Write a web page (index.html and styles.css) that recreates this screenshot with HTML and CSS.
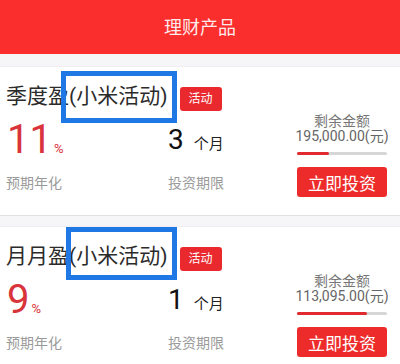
FILE: index.html
```html
<!DOCTYPE html>
<html lang="zh-CN">
  <head>
    <meta charset="UTF-8" />
    <meta name="viewport" content="width=device-width, initial-scale=1.0" />
    <title>理财产品</title>
    <link rel="stylesheet" href="styles.css">
  </head>
  <body>
    <div class="header">理财产品</div>

    <div class="product">
      <div class="mark mark-1"></div>
      <div class="product-main">
        <div class="product-title">
          <span class="name">季度盈(小米活动)</span>
          <span class="tag">活动</span>
        </div>
        <div class="product-stats">
          <div class="stat rate">
            <div class="stat-value"><span class="big">11</span><span class="unit">%</span></div>
            <div class="stat-label">预期年化</div>
          </div>
          <div class="stat period">
            <div class="stat-value"><span class="mid">3</span><span class="unit-dark">个月</span></div>
            <div class="stat-label">投资期限</div>
          </div>
        </div>
      </div>
      <div class="product-side">
        <div class="remain-label">剩余金额</div>
        <div class="remain-value">195,000.00(元)</div>
        <div class="progress"><div class="progress-fill" style="width: 36%"></div></div>
        <button class="invest-btn">立即投资</button>
      </div>
    </div>

    <div class="product">
      <div class="mark mark-2"></div>
      <div class="product-main">
        <div class="product-title">
          <span class="name">月月盈(小米活动)</span>
          <span class="tag">活动</span>
        </div>
        <div class="product-stats">
          <div class="stat rate">
            <div class="stat-value"><span class="big">9</span><span class="unit">%</span></div>
            <div class="stat-label">预期年化</div>
          </div>
          <div class="stat period">
            <div class="stat-value"><span class="mid">1</span><span class="unit-dark">个月</span></div>
            <div class="stat-label">投资期限</div>
          </div>
        </div>
      </div>
      <div class="product-side">
        <div class="remain-label">剩余金额</div>
        <div class="remain-value">113,095.00(元)</div>
        <div class="progress"><div class="progress-fill" style="width: 78%"></div></div>
        <button class="invest-btn">立即投资</button>
      </div>
    </div>
  </body>
</html>
```

FILE: styles.css
```css
body {
  margin: 0;
  background: #f6f6f8;
  font-family: Roboto, "Noto Sans CJK SC", sans-serif;
  width: 400px;
  height: 364px;
  overflow: hidden;
}
.header {
  height: 54px;
  line-height: 56px;
  background: #fb2e2e;
  color: #fdeaea;
  text-align: center;
  font-size: 18px;
}
.product {
  position: relative;
  display: flex;
  height: 150px;
  box-sizing: border-box;
  margin-top: 12px;
  padding: 0 10px 0 6px;
  background: white;
  border-top: 1px solid #efeff1;
  border-bottom: 1px solid #e2e2e4;
}
.product + .product {
  margin-top: 10px;
}
.mark {
  position: absolute;
  border: 5px solid #1f78e4;
  box-sizing: border-box;
}
.mark-1 {
  left: 61px;
  top: 4px;
  width: 116px;
  height: 52px;
}
.mark-2 {
  left: 66px;
  top: 0;
  width: 111px;
  height: 53px;
}
.product-main {
  flex: 1;
}
.product-title {
  display: flex;
  align-items: center;
  padding-top: 15px;
  height: 28px;
}
.name {
  font-size: 21px;
  color: #2b2b2b;
  line-height: 28px;
}
.tag {
  margin-left: 12px;
  margin-top: 6px;
  width: 42px;
  height: 24px;
  line-height: 24px;
  text-align: center;
  font-size: 12px;
  color: white;
  background: #e9292d;
  border-radius: 3px;
}
.product-stats {
  display: flex;
  margin-top: 8px;
}
.rate {
  width: 162px;
}
.stat-value {
  height: 44px;
  line-height: 44px;
  white-space: nowrap;
}
.big {
  font-size: 40px;
  color: #d9343b;
  padding-left: 1px;
}
.unit {
  font-size: 13px;
  color: #d9343b;
  margin-left: 2px;
}
.mid {
  font-size: 28px;
  color: #111;
}
.unit-dark {
  font-size: 15px;
  color: #222;
  margin-left: 10px;
}
.stat-label {
  margin-top: 11px;
  font-size: 14px;
  line-height: 20px;
  color: #9a9a9a;
}
.product-side {
  width: 96px;
  padding-top: 47px;
  text-align: center;
}
.remain-label {
  font-size: 14px;
  line-height: 15px;
  color: #777;
}
.remain-value {
  font-size: 14px;
  line-height: 15px;
  color: #666;
  white-space: nowrap;
}
.progress {
  width: 90px;
  height: 3px;
  margin: 8px auto 0;
  background: #d6d6d6;
  border-radius: 2px;
}
.progress-fill {
  height: 100%;
  background: #e02a30;
  border-radius: 2px;
}
.invest-btn {
  display: block;
  width: 90px;
  height: 30px;
  margin: 12px auto 0;
  padding: 0;
  border: none;
  border-radius: 3px;
  background: #ee2b2b;
  color: white;
  font-family: "Noto Sans CJK SC", sans-serif;
  font-size: 17px;
}
```
